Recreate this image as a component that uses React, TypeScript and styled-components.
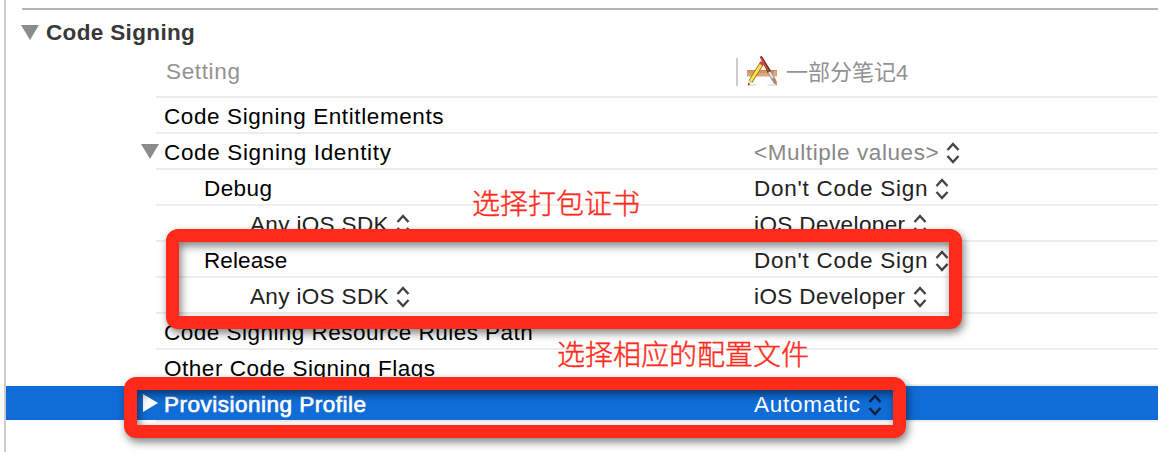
import React from "react";
import styled, { createGlobalStyle } from "styled-components";

const GlobalStyle = createGlobalStyle`
  * { box-sizing: border-box; }
  body {
    margin: 0;
    background: #fff;
    overflow: hidden;
    font-family: "Liberation Sans", "Noto Sans CJK SC", sans-serif;
    font-size: 22.5px;
    color: #000;
  }
`;

const Panel = styled.main`
  position: relative;
  width: 1158px;
  height: 452px;
  overflow: hidden;
  border-left: 2px solid #ccc;
  margin-left: 4px;
  padding-top: 8px;
`;

const Section = styled.section`
  border-top: 2px solid #b4b4b4;
  margin-left: 16px;
`;

const SectionTitle = styled.h2`
  display: flex;
  align-items: center;
  gap: 7px;
  margin: 0 0 0 -1px;
  height: 44px;
  font-size: 22.5px;
  line-height: 42px;
  font-weight: 700;
  color: #383838;
`;

const Header = styled.div`
  display: flex;
  align-items: center;
  height: 44px;
  margin-left: 150px;
  padding: 0 0 6px 10px;
  border-bottom: 2px solid #ededed;
  color: #929292;
`;

const HeaderSetting = styled.div`
  width: 570px;
`;

const HeaderTarget = styled.div`
  display: flex;
  align-items: center;
  height: 28px;
  padding-left: 9px;
  border-left: 2px solid #ccc;
`;

const TargetName = styled.span`
  margin: 1px 0 0 9px;
  font-size: 22px;
  line-height: 28px;
`;

const Line = styled.div`
  display: flex;
  height: 36px;
`;

const Gutter = styled.div<{ $selected?: boolean }>`
  position: relative;
  z-index: 1;
  display: flex;
  align-items: center;
  justify-content: flex-end;
  width: 150px;
  height: 34px;
  background: ${(p) => (p.$selected ? "#106cd6" : "transparent")};
`;

const Cells = styled.div<{ $selected?: boolean }>`
  display: flex;
  flex: 1;
  height: 36px;
  line-height: 34px;
  border-bottom: 2px solid #ededed;
  color: ${(p) => (p.$selected ? "#fff" : "#000")};
  background: ${(p) => (p.$selected ? "#106cd6" : "transparent")};
  background-clip: padding-box;
`;

const NameCell = styled.div<{ $level: number }>`
  display: flex;
  align-items: center;
  width: 598px;
  padding-left: ${(p) => [8, 48, 94][p.$level]}px;
  color: ${(p) => (p.$level === 2 ? "#222" : "inherit")};
`;

const ValueCell = styled.div<{ $muted?: boolean; $selected?: boolean }>`
  display: flex;
  align-items: center;
  color: ${(p) => (p.$selected ? "#fff" : p.$muted ? "#888" : "#222")};
`;

const Label = styled.span<{ $track?: number; $strong?: boolean }>`
  padding-top: 4px;
  white-space: pre;
  letter-spacing: ${(p) => p.$track ?? 0.56}px;
  -webkit-text-stroke: ${(p) => (p.$strong ? "0.7px currentColor" : "0")};
`;

const TitleLabel = styled(Label)`
  padding-top: 1px;
`;

const DownArrow = styled.span`
  width: 0;
  height: 0;
  border: 9px solid transparent;
  border-top: 15px solid #8c8c8c;
  border-bottom: 0;
`;

const RightArrow = styled.span`
  width: 0;
  height: 0;
  margin-right: -2px;
  border: 9px solid transparent;
  border-left: 15px solid #fff;
  border-right: 0;
`;

const RowArrow = styled(DownArrow)`
  margin-right: -3px;
`;

const StepperIcon = styled.svg`
  flex: none;
  width: 14px;
  height: 22px;
  margin: 4px 0 0 7px;
`;

const Frame = styled.div<{ $x: number; $y: number; $w: number; $h: number }>`
  position: absolute;
  z-index: 2;
  left: ${(p) => p.$x - 6}px;
  top: ${(p) => p.$y}px;
  width: ${(p) => p.$w}px;
  height: ${(p) => p.$h}px;
  border: 13px solid #ff2a1a;
  border-radius: 12px;
  filter: drop-shadow(2px 4px 4px rgba(0, 0, 0, 0.5));
`;

const Note = styled.div<{ $x: number; $y: number }>`
  position: absolute;
  left: ${(p) => p.$x - 6}px;
  top: ${(p) => p.$y}px;
  font-family: "Noto Sans CJK SC", sans-serif;
  font-size: 28px;
  font-weight: 300;
  line-height: 32px;
  color: #ff2a1a;
  white-space: nowrap;
  -webkit-text-stroke: 0.4px #ff2a1a;
`;

const TargetIcon = styled.svg`
  flex: none;
  width: 30px;
  height: 30px;
  margin-bottom: 3px;
`;

const Stepper = ({ color = "#444" }: { color?: string }) => (
  <StepperIcon viewBox="0 0 14 22" fill="none" stroke={color} strokeWidth="2.4">
    <path d="M1.500 8 7 2l5.500 6M1.500 14 7 20l5.500-6" />
  </StepperIcon>
);

const AppIcon = () => (
  <TargetIcon viewBox="0 0 30 30">
    <ellipse cx="5" cy="29" rx="5" ry="1" fill="#e4e4e4" />
    <ellipse cx="25" cy="29" rx="5" ry="1" fill="#e4e4e4" />
    <path d="M0 14h30v6.500H0z" fill="#dda575" />
    <path d="M0 14.500h30" stroke="#c68e5e" />
    <path d="M2 15v2m3-2v2m3-2v2m3-2v2m3-2v2m3-2v2m3-2v2m3-2v2m3-2v2" stroke="#ae7b4e" />
    <path d="M14.800 7.500 3.500 25.500" stroke="#8b6e18" strokeWidth="4.400" />
    <path d="M14.800 7.500 3.700 25" stroke="#fbe34a" strokeWidth="2.900" />
    <path d="m1.700 24 3.600 2.100L1 29.500z" fill="#ecd3a2" />
    <path d="m1.300 27-.3 2.500 2-1.500z" fill="#222" />
    <path d="m13.800 5 3.800 2.300-1.700 2.600-3.800-2.400z" fill="#e93b40" />
    <path d="m12.800.8 2-.8 9.700 15.500-3.500 2z" fill="#7b2517" />
    <path d="m14 2 7.700 13.500" stroke="#cf543a" strokeWidth="1.500" />
    <path d="m22.300 16 4 7" stroke="#8e8e8e" strokeWidth="3.800" />
    <path d="m22.300 16 4 7" stroke="#e1e1e1" strokeWidth="2.200" />
    <path d="m24.300 23 3.400-1.800 2 4.300.3 4-3.600-2.500z" fill="#b78375" />
  </TargetIcon>
);

type Setting = {
  name: string;
  level?: number;
  value?: string;
  popup?: boolean;
  open?: boolean;
  muted?: boolean;
  selected?: boolean;
  nameTrack?: number;
  valueTrack?: number;
};

const settings: Setting[] = [
  { name: "Code Signing Entitlements", nameTrack: 0.6 },
  { name: "Code Signing Identity", nameTrack: 0.65, value: "<Multiple values>", valueTrack: 0.6, open: true, muted: true },
  { name: "Debug", level: 1, nameTrack: 0.4, value: "Don't Code Sign", valueTrack: 0.74 },
  { name: "Any iOS SDK", level: 2, nameTrack: 0.35, value: "iOS Developer", valueTrack: 0.4, popup: true },
  { name: "Release", level: 1, nameTrack: 0.1, value: "Don't Code Sign", valueTrack: 0.74 },
  { name: "Any iOS SDK", level: 2, nameTrack: 0.35, value: "iOS Developer", valueTrack: 0.4, popup: true },
  { name: "Code Signing Resource Rules Path", nameTrack: 0.48 },
  { name: "Other Code Signing Flags", nameTrack: 0.53 },
  { name: "Provisioning Profile", nameTrack: 0.5, value: "Automatic", valueTrack: 0.74, selected: true },
];

const SettingRow = ({ s }: { s: Setting }) => (
  <Line>
    <Gutter $selected={s.selected}>
      {s.open && <RowArrow />}
      {s.selected && <RightArrow />}
    </Gutter>
    <Cells $selected={s.selected}>
      <NameCell $level={s.level ?? 0}>
        <Label $track={s.nameTrack} $strong={s.selected}>{s.name}</Label>
        {s.popup && <Stepper />}
      </NameCell>
      {s.value && (
        <ValueCell $muted={s.muted} $selected={s.selected}>
          <Label $track={s.valueTrack}>{s.value}</Label>
          <Stepper color={s.selected ? "#08203f" : "#444"} />
        </ValueCell>
      )}
    </Cells>
  </Line>
);

export default function App() {
  return (
    <>
      <GlobalStyle />
      <Panel>
        <Section>
          <SectionTitle>
            <DownArrow />
            <TitleLabel $track={0.35}>Code Signing</TitleLabel>
          </SectionTitle>
        </Section>
        <Header>
          <HeaderSetting>
            <Label $track={0.65}>Setting</Label>
          </HeaderSetting>
          <HeaderTarget>
            <AppIcon />
            <TargetName>一部分笔记4</TargetName>
          </HeaderTarget>
        </Header>
        {settings.map((s, i) => (
          <SettingRow key={i} s={s} />
        ))}
        <Frame $x={166} $y={229} $w={796} $h={100} />
        <Frame $x={124} $y={377} $w={782} $h={61} />
        <Note $x={472} $y={186}>选择打包证书</Note>
        <Note $x={557} $y={337}>选择相应的配置文件</Note>
      </Panel>
    </>
  );
}
